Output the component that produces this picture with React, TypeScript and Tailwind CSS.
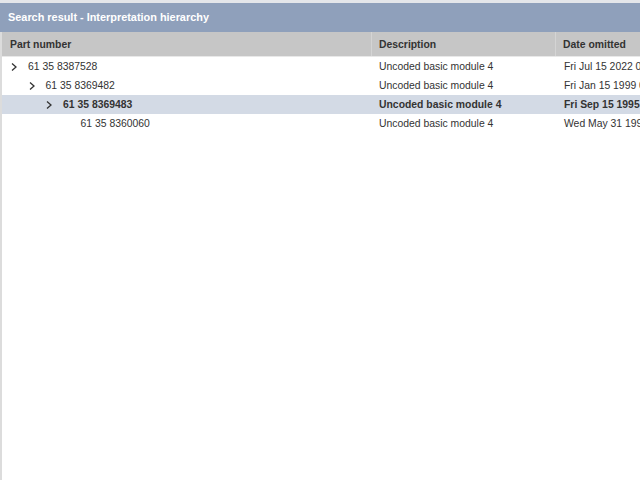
import React from "react";

type Row = { level: number; part: string; desc: string; date: string; expandable: boolean; selected?: boolean };

const rows: Row[] = [
  { level: 0, part: "61 35 8387528", desc: "Uncoded basic module 4", date: "Fri Jul 15 2022 00:00:00", expandable: true },
  { level: 1, part: "61 35 8369482", desc: "Uncoded basic module 4", date: "Fri Jan 15 1999 00:00:00", expandable: true },
  { level: 2, part: "61 35 8369483", desc: "Uncoded basic module 4", date: "Fri Sep 15 1995 00:00:00", expandable: true, selected: true },
  { level: 3, part: "61 35 8360060", desc: "Uncoded basic module 4", date: "Wed May 31 1995 00:00:00", expandable: false },
];

const Chevron = () => (
  <svg width="8" height="10" viewBox="0 0 8 10" className="shrink-0">
    <path d="M2 1.5 L6 5 L2 8.5" fill="none" stroke="#333" strokeWidth="1.3" />
  </svg>
);

export default function App() {
  return (
    <div
      className="w-[640px] h-[480px] overflow-hidden bg-white flex flex-col"
      style={{ fontFamily: '"Liberation Sans", Arial, sans-serif' }}
    >
      <div className="h-[3px] bg-[#e4e6ea] shrink-0" />
      <div className="h-[29px] bg-[#8fa0bb] flex items-center px-[8px] text-white text-[10.9px] font-bold shrink-0">
        Search result - Interpretation hierarchy
      </div>
      <div className="flex-1 flex flex-col border-l-2 border-[#dcdcdc] overflow-hidden">
        <div className="h-[25px] bg-[#c6c6c6] flex text-[10.4px] font-bold text-[#333] shrink-0 border-b border-[#e8e8e8]">
          <div className="w-[370px] flex items-center pl-[8px] pt-[1px] border-r border-[#d4d4d4]">Part number</div>
          <div className="w-[184px] flex items-center pl-[7px] pt-[1px] border-r border-[#d4d4d4]">Description</div>
          <div className="flex-1 flex items-center pl-[7px] pt-[1px] whitespace-nowrap">Date omitted</div>
        </div>
        <div className="flex flex-col">
          {rows.map((r) => (
            <div
              key={r.part}
              className={`h-[19px] flex text-[10.4px] text-[#333] whitespace-nowrap ${r.selected ? "bg-[#d3dae5] font-bold" : ""}`}
            >
              <div className="w-[370px] flex items-center pt-[1px]" style={{ paddingLeft: 8 + r.level * 17.5 }}>
                <div className="w-[18px] flex items-center">{r.expandable ? <Chevron /> : null}</div>
                <span>{r.part}</span>
              </div>
              <div className="w-[184px] flex items-center pl-[7px] pt-[1px]">{r.desc}</div>
              <div className="flex-1 flex items-center pl-[8px] pt-[1px] overflow-hidden">{r.date}</div>
            </div>
          ))}
        </div>
      </div>
    </div>
  );
}
